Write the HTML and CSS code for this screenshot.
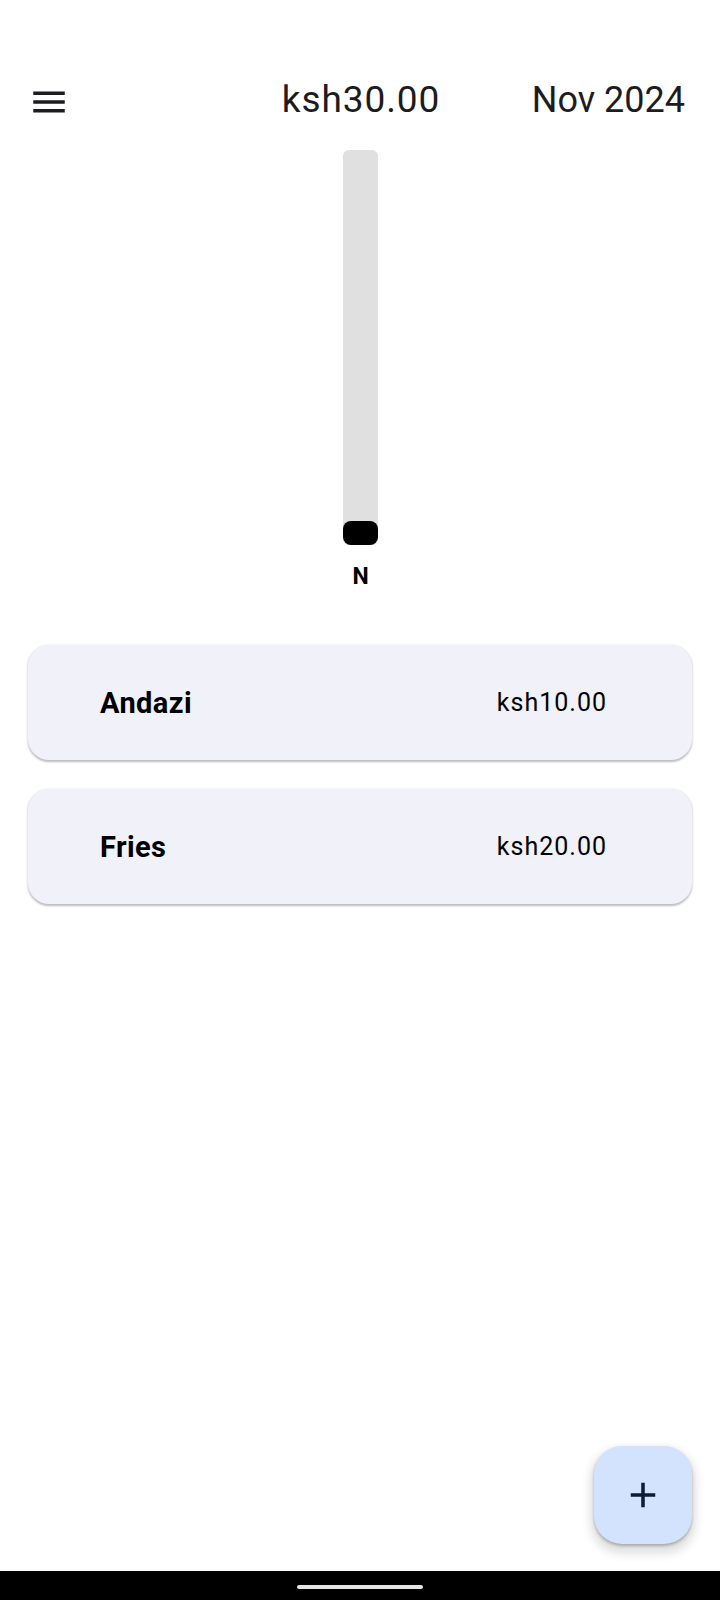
FILE: index.html
```html
<!DOCTYPE html>
<html lang="en">
<head>
<meta charset="utf-8">
<title>Expenses</title>
<link rel="stylesheet" href="styles.css">
</head>
<body>
<div class="screen">
  <div class="status-bar"></div>
  <header class="app-bar">
    <div class="app-bar-left">
      <svg class="menu-icon" viewBox="0 0 24 24" width="42" height="42" aria-hidden="true">
        <path d="M3 18h18v-2H3v2zm0-5h18v-2H3v2zm0-7v2h18V6H3z" fill="currentColor"/>
      </svg>
    </div>
    <div class="app-bar-title">ksh30.00</div>
    <div class="app-bar-right">Nov 2024</div>
  </header>

  <main class="content">
    <section class="chart">
      <div class="bar-track">
        <div class="bar-fill"></div>
      </div>
      <div class="bar-label">N</div>
    </section>

    <ul class="expense-list">
      <li class="expense-card">
        <span class="expense-name">Andazi</span>
        <span class="expense-amount">ksh10.00</span>
      </li>
      <li class="expense-card">
        <span class="expense-name">Fries</span>
        <span class="expense-amount">ksh20.00</span>
      </li>
    </ul>
  </main>

  <button class="fab" type="button" aria-label="Add">
    <svg viewBox="0 0 24 24" width="42" height="42" aria-hidden="true">
      <path d="M19 13h-6v6h-2v-6H5v-2h6V5h2v6h6v2z" fill="currentColor"/>
    </svg>
  </button>

  <footer class="nav-bar">
    <div class="home-indicator"></div>
  </footer>
</div>
</body>
</html>
```

FILE: styles.css
```css
* {
  box-sizing: border-box;
}

html, body {
  margin: 0;
  padding: 0;
  background: #ffffff;
}

body {
  font-family: Roboto, "Noto Sans", "Liberation Sans", sans-serif;
  color: #1d1b20;
}

.screen {
  position: relative;
  width: 720px;
  height: 1600px;
  display: flex;
  flex-direction: column;
  overflow: hidden;
}

.status-bar {
  height: 50px;
  flex: none;
}

.app-bar {
  height: 98px;
  flex: none;
  display: grid;
  grid-template-columns: 1fr auto 1fr;
  align-items: center;
  padding: 0 28px;
}

.app-bar-left {
  display: flex;
  align-items: center;
}

.menu-icon {
  display: block;
  color: #1d1b20;
  margin-top: 5px;
}

.app-bar-title {
  font-size: 37px;
  font-weight: 400;
  letter-spacing: 0.9px;
  line-height: 42px;
  color: #1d1b20;
  margin-top: 2px;
  margin-left: 2px;
}

.app-bar-right {
  justify-self: end;
  font-size: 36px;
  font-weight: 400;
  line-height: 42px;
  color: #1d1b20;
  margin-top: 2px;
  margin-right: 7px;
}

.content {
  flex: 1;
  display: flex;
  flex-direction: column;
}

.chart {
  display: flex;
  flex-direction: column;
  align-items: center;
  padding-top: 2px;
  padding-left: 1px;
}

.bar-track {
  width: 35px;
  height: 395px;
  background: #e0e0e0;
  border-radius: 6px;
  display: flex;
  flex-direction: column;
  justify-content: flex-end;
}

.bar-fill {
  height: 24px;
  background: #000000;
  border-radius: 8px;
}

.bar-label {
  margin-top: 18px;
  font-size: 23px;
  font-weight: 700;
  line-height: 27px;
  color: #000000;
}

.expense-list {
  list-style: none;
  margin: 55px 0 0;
  padding: 0 28px;
  display: flex;
  flex-direction: column;
  gap: 29px;
}

.expense-card {
  height: 115px;
  background: #f0f1f9;
  border-radius: 21px;
  box-shadow: 0 1.5px 2px rgba(0, 0, 0, 0.22), 0 1px 3px 1px rgba(0, 0, 0, 0.06);
  display: flex;
  align-items: center;
  justify-content: space-between;
  padding: 0 85px 0 72px;
}

.expense-name {
  font-size: 29px;
  font-weight: 700;
  letter-spacing: 0.4px;
  color: #000000;
}

.expense-amount {
  font-size: 25px;
  font-weight: 400;
  letter-spacing: 1px;
  color: #000000;
}

.fab {
  position: absolute;
  right: 28px;
  bottom: 56px;
  width: 98px;
  height: 98px;
  border: none;
  border-radius: 28px;
  background: #d3e3fd;
  color: #0a1d33;
  display: flex;
  align-items: center;
  justify-content: center;
  padding: 0;
  box-shadow: 0 6px 10px 4px rgba(0, 0, 0, 0.12), 0 2px 3px rgba(0, 0, 0, 0.25);
}

.fab svg {
  display: block;
}

.nav-bar {
  height: 29px;
  flex: none;
  background: #000000;
  display: flex;
  justify-content: center;
  padding-top: 14px;
}

.home-indicator {
  width: 126px;
  height: 4px;
  border-radius: 2px;
  background: #e6e6e6;
}
```
